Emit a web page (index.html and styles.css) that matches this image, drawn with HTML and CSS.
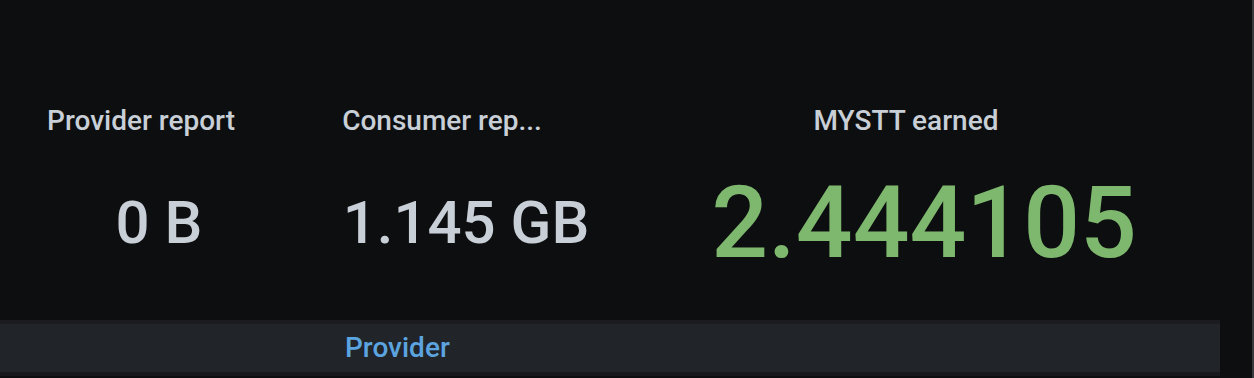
FILE: index.html
```html
<!DOCTYPE html>
<html lang="en">
<head>
<meta charset="utf-8">
<title>Dashboard</title>
<link rel="stylesheet" href="styles.css">
</head>
<body>
<div class="page">
  <main class="content">
    <section class="panels">
      <div class="panel">
        <div class="panel-title">Provider report</div>
        <div class="panel-value"><span class="stat stat--md">0 B</span></div>
      </div>
      <div class="panel">
        <div class="panel-title panel-title--mid">Consumer rep...</div>
        <div class="panel-value panel-value--mid"><span class="stat stat--md">1.145 GB</span></div>
      </div>
      <div class="panel">
        <div class="panel-title">MYSTT earned</div>
        <div class="panel-value"><span class="stat stat--lg stat--green">2.444105</span></div>
      </div>
    </section>
    <div class="row-header">
      <span class="row-title">Provider</span>
    </div>
  </main>
  <div class="edge"></div>
</div>
</body>
</html>
```

FILE: styles.css
```css
html, body {
  margin: 0;
  padding: 0;
  background: #0d0e10;
}

body {
  font-family: Roboto, "Liberation Sans", sans-serif;
  width: 1254px;
  height: 378px;
  overflow: hidden;
}

.page {
  display: flex;
  height: 378px;
}

.content {
  flex: 1;
  display: flex;
  flex-direction: column;
}

.edge {
  width: 2px;
  background: #393a3d;
}

.panels {
  display: grid;
  grid-template-columns: 282px 316px 616px;
  height: 320px;
}

.panel {
  display: flex;
  flex-direction: column;
  align-items: center;
  padding-top: 105px;
  box-sizing: border-box;
  min-width: 0;
}

.panel-title {
  font-size: 28px;
  line-height: 32px;
  font-weight: 500;
  color: #c8cfd7;
  white-space: nowrap;
}

.panel-title--mid {
  padding-left: 4px;
}

.panel-value {
  flex: 1;
  display: flex;
  align-items: center;
  justify-content: center;
  padding-left: 36px;
  padding-bottom: 12px;
}

.panel-value--mid {
  padding-left: 52px;
}

.stat {
  font-weight: 500;
  color: #c8cfd7;
  white-space: nowrap;
}

.stat--md {
  font-size: 60px;
  line-height: 60px;
}

.stat--lg {
  font-size: 100px;
  line-height: 100px;
}

.stat--green {
  color: #7eb86e;
}

.row-header {
  width: 1220px;
  height: 48px;
  background: #212428;
  border-top: 4px solid #1a1c1f;
  border-bottom: 4px solid #16181b;
  display: flex;
  align-items: center;
}

.row-title {
  margin-left: 345px;
  font-size: 28px;
  line-height: 32px;
  font-weight: 500;
  color: #5ba4e0;
}
```
